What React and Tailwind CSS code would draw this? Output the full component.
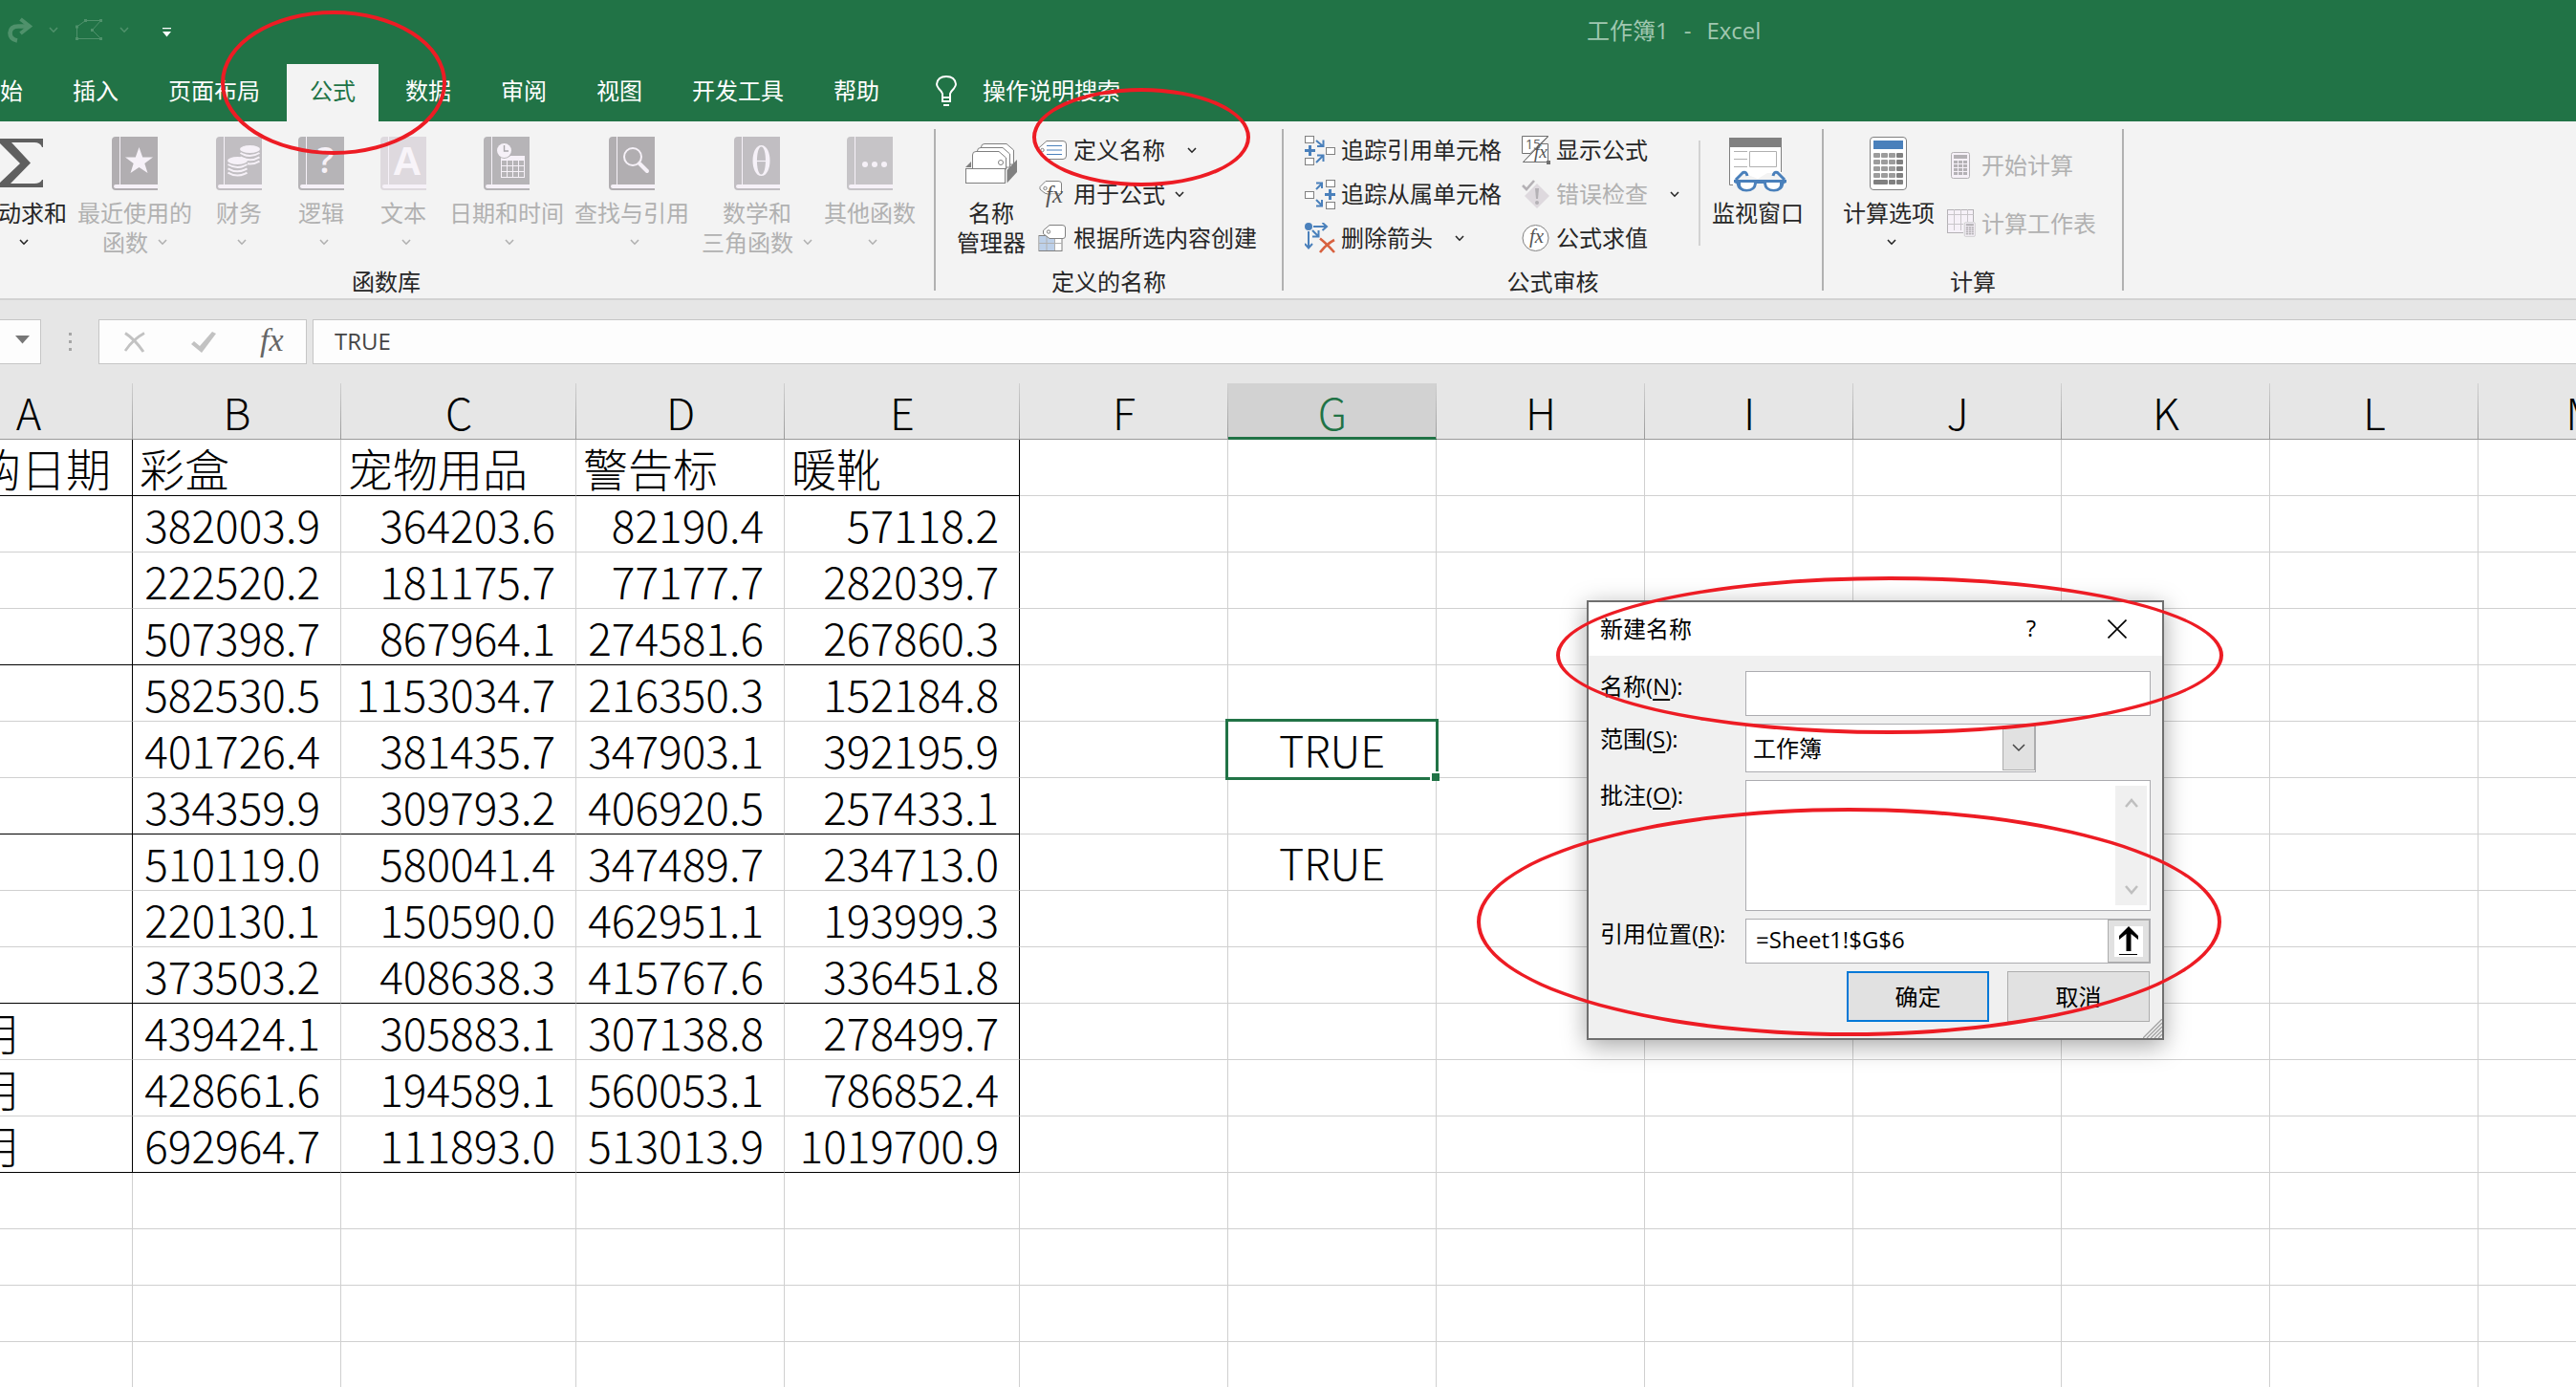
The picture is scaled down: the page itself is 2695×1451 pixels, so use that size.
import React from "react";

const UI = "font-['Open_Sans','Noto_Sans_CJK_SC',sans-serif]";
const SHEET = "font-['Noto_Sans_CJK_SC',sans-serif] font-light";

/* ---------- small drawings ---------- */

function Chevron({ className = "" }) {
  return (
    <svg className={`shrink-0 ${className}`} width="10" height="7" viewBox="0 0 10 7" fill="none" stroke="currentColor" strokeWidth="1.6">
      <path d="M1 1 L5 5.2 L9 1" />
    </svg>
  );
}

function Fx({ x, y, size, fill = "#555" }) {
  return (
    <text x={x} y={y} fontSize={size} fontStyle="italic" fontFamily="Liberation Serif, serif" fill={fill}>
      fx
    </text>
  );
}

function Book({ fill, children }) {
  return (
    <svg width="48" height="56" viewBox="0 0 48 56">
      <path d="M4 0 H48 V56 H4 Q0 56 0 52 V4 Q0 0 4 0 Z" fill={fill} />
      <path d="M8.5 0 V50" stroke="#f6f1f8" />
      <path d="M48 50 H4 Q2 50 2 52 Q2 54 4 54 H48 Z" fill="#f6f1f8" />
      {children}
    </svg>
  );
}

function StarBook() {
  return (
    <Book fill="#b1aeb1">
      <path d="M28.500 11 L32.200 21.500 H43 L34.300 28 L37.500 38 L28.500 32 L19.500 38 L22.700 28 L14 21.500 H24.800 Z" fill="#f6f1f8" />
    </Book>
  );
}

function Coins({ x, y }) {
  return (
    <g transform={`translate(${x} ${y})`}>
      <path d="M0 4 V17 Q10.500 23 21 17 V4 Z" fill="#c1bec2" />
      <ellipse cx="10.500" cy="4" rx="10.500" ry="4" fill="#f6f1f8" />
      <path d="M0.500 8 Q10.500 14 20.500 8 M0.500 12.300 Q10.500 18.300 20.500 12.300 M0.500 16.600 Q10.500 22.600 20.500 16.600" stroke="#f6f1f8" strokeWidth="2" fill="none" />
    </g>
  );
}

function CoinBook() {
  return (
    <Book fill="#c1bec2">
      <Coins x={25} y={9} />
      <Coins x={12} y={21} />
    </Book>
  );
}

function QuestionBook() {
  return (
    <Book fill="#b6b4b7">
      <text x="29" y="38" fontSize="38" fontWeight="600" textAnchor="middle" fontFamily="Open Sans, sans-serif" fill="#f6f1f8">?</text>
    </Book>
  );
}

function LetterBook() {
  return (
    <Book fill="#ded9de">
      <text x="28" y="40" fontSize="42" fontWeight="bold" textAnchor="middle" fontFamily="Liberation Sans, sans-serif" fill="#f8f4f9">A</text>
    </Book>
  );
}

function DateBook() {
  return (
    <Book fill="#b6b4b7">
      <rect x="18" y="20" width="25" height="23" fill="#f6f1f8" />
      {[25, 31, 37].map((y) => [19, 25, 31, 37].map((x) => <rect key={`${x}-${y}`} x={x} y={y} width="5" height="5" fill="#b6b4b7" />))}
      <circle cx="21.500" cy="14.500" r="8.500" fill="#b6b4b7" />
      <circle cx="21.500" cy="14.500" r="7.500" fill="#f6f1f8" />
      <path d="M21.500 9 V15 H26" stroke="#a9a7aa" fill="none" strokeWidth="1.400" />
    </Book>
  );
}

function SearchBook() {
  return (
    <Book fill="#b1aeb1">
      <circle cx="25" cy="21" r="9" stroke="#f6f1f8" strokeWidth="2" fill="none" />
      <path d="M32 28 L40 36" stroke="#f6f1f8" strokeWidth="4" strokeLinecap="round" />
    </Book>
  );
}

function ThetaBook() {
  return (
    <Book fill="#c1bec2">
      <path d="M28.500 9 C40.500 9 40.500 41 28.500 41 C16.500 41 16.500 9 28.500 9 Z M28.500 10.500 C22.500 10.500 22.500 39.500 28.500 39.500 C34.500 39.500 34.500 10.500 28.500 10.500 Z" fill="#f6f1f8" fillRule="evenodd" />
      <path d="M23 25.500 H34" stroke="#f6f1f8" strokeWidth="1.200" />
    </Book>
  );
}

function DotsBook() {
  return (
    <Book fill="#c6c4c7">
      <circle cx="19" cy="29" r="3" fill="#f6f1f8" />
      <circle cx="29" cy="29" r="3" fill="#f6f1f8" />
      <circle cx="39" cy="29" r="3" fill="#f6f1f8" />
    </Book>
  );
}

function Sigma() {
  return (
    <svg width="48" height="56" viewBox="0 0 48 56">
      <path d="M0 2 H47 V11 H46 Q44 6 38 6 H14 L34 27.500 L13 49 H38 Q44 49 46 45 H47 V53 H0 V50 L23 28 L0 5 Z" fill="#5f5f5f" />
    </svg>
  );
}

function NameManagerIcon() {
  return (
    <svg width="54" height="56" viewBox="0 -7 54 56" fill="#fff" stroke="#808080">
      <path d="M16.500 20 V4 Q16.500 .500 20 .500 H43 L50.500 7 V22 H30 Z" />
      <path d="M12.500 22 V8 Q12.500 4.500 16 4.500 H39 L46.500 11 V25 H25 Z" />
      <path d="M7.500 27 V12 Q7.500 8.500 11 8.500 H35 L42.500 15 V27 Z" />
      <circle cx="37" cy="20" r="2.500" />
      <path d="M0 25 L6 19 V25 Z M43.500 28 L54 17 V30 L43.500 41.500 Z" fill="#808080" stroke="none" />
      <rect x="0.500" y="26.500" width="41" height="15" />
    </svg>
  );
}

function DefineNameIcon() {
  return (
    <svg width="30" height="20" viewBox="0 0 30 20">
      <path d="M9 .500 H26 Q29.500 .500 29.500 4 V16 Q29.500 19.500 26 19.500 H9 L.500 12 V8 Z" fill="#fff" stroke="#808080" />
      <circle cx="4.500" cy="10" r="1.700" fill="none" stroke="#808080" />
      <path d="M9 5.500 H25 M9 10 H25 M9 14.500 H25" stroke="#4a80bb" />
    </svg>
  );
}

function UseInFormulaIcon() {
  return (
    <svg width="30" height="30" viewBox="0 0 30 30">
      <path d="M8 1.500 H21 Q24.500 1.500 24.500 4 V15 H10 L7 14 L2 10 V7.500 Z" fill="#fff" stroke="#808080" />
      <circle cx="7.500" cy="9" r="1.700" fill="none" stroke="#808080" />
      <path d="M14 15 H27 V30 H8 V20 Z" fill="#f3f3f3" />
      <Fx x={8} y={24} size={25} />
    </svg>
  );
}

function CreateFromSelectionIcon() {
  return (
    <svg width="30" height="28" viewBox="0 0 30 28">
      <rect x="1" y="11.500" width="24" height="16" fill="#fff" stroke="#808080" />
      <path d="M1.500 12 H17 V27 H1.500 Z" fill="#bdd0e9" />
      <path d="M1 19.500 H25 M9 12 V27 M17.500 12 V27" stroke="#b0b0b0" />
      <path d="M12 .500 H25 Q28.500 .500 28.500 3 V12 Q28.500 14.500 26 14.500 H12 L5.500 9.500 V6 Z" fill="#fff" stroke="#808080" />
      <circle cx="11" cy="7.500" r="1.700" fill="none" stroke="#808080" />
    </svg>
  );
}

function Arrow({ x1, y1, x2, y2, head }) {
  return <path d={`M${x1} ${y1} L${x2} ${y2} ${head}`} stroke="#4a80bb" strokeWidth="2" fill="none" />;
}

function PrecedentsIcon() {
  return (
    <svg width="32" height="31" viewBox="0 0 32 31">
      <g fill="#fff" stroke="#808080">
        <rect x="0.500" y="0.500" width="9" height="7" />
        <rect x="22.500" y="12.500" width="9" height="7" />
        <rect x="0.500" y="23.500" width="9" height="7" />
      </g>
      <path d="M5.500 10 V21 M0 15.500 H11" stroke="#4a80bb" strokeWidth="3" />
      <Arrow x1={12} y1={5} x2={19} y2={11} head="M19.500 4.500 V11 H13" />
      <Arrow x1={12} y1={28} x2={19} y2={21} head="M13 20.500 H19.500 V27" />
    </svg>
  );
}

function DependentsIcon() {
  return (
    <svg width="32" height="31" viewBox="0 0 32 31">
      <g fill="#fff" stroke="#808080">
        <rect x="0.500" y="12.500" width="9" height="7" />
        <rect x="22.500" y="0.500" width="9" height="7" />
        <rect x="22.500" y="23.500" width="9" height="7" />
      </g>
      <path d="M26.500 10 V21 M21 15.500 H32" stroke="#4a80bb" strokeWidth="3" />
      <Arrow x1={12} y1={10} x2={18} y2={4} head="M12 3.500 H18 V9" />
      <Arrow x1={12} y1={21} x2={18} y2={27} head="M18 21 V27.500 H12" />
    </svg>
  );
}

function RemoveArrowsIcon() {
  return (
    <svg width="32" height="32" viewBox="0 0 32 32">
      <circle cx="4" cy="4" r="4" fill="#4a80bb" />
      <g stroke="#4a80bb" strokeWidth="2" fill="none">
        <path d="M9 4 H23 M18.500 0 L23 4 L18.500 8" />
        <path d="M4 9 V26 M0 22 L4 26.500 L8 22" />
        <path d="M8 8 L14 14 M14.500 8 V14.500 H8" />
      </g>
      <path d="M16 16.500 Q23 22 31 31 M31 18 Q22 23 16 31" stroke="#d8613f" strokeWidth="2.600" fill="none" />
    </svg>
  );
}

function ShowFormulasIcon() {
  return (
    <svg width="30" height="30" viewBox="0 0 30 30">
      <path d="M.500 .500 H27.500 L9 18.500 H.500 Z" fill="#fff" stroke="#707070" />
      <path d="M27.500 8.500 V27.500 H1.500 L27.500 1 M20 8.500 H27.500" fill="none" stroke="#707070" />
      <path d="M20 9 H27 V27 H3 Z" fill="#fff" />
      <text x="4" y="14" fontSize="14" fontFamily="Open Sans, sans-serif" fill="#606060">15</text>
      <path d="M27.500 .500 L1.500 27.500" stroke="#707070" />
      <Fx x={13} y={23} size={19} />
      <rect x="26" y="26" width="4" height="4" fill="#707070" />
    </svg>
  );
}

function ErrorCheckIcon() {
  return (
    <svg width="30" height="30" viewBox="0 0 30 30">
      <path d="M16 4 L29 17 L16 30 L3 17 Z" fill="#ded9de" />
      <path d="M14 9 H18 L17 20 H15 Z" fill="#b4b1b5" />
      <circle cx="16" cy="24" r="2" fill="#b4b1b5" />
      <path d="M1 6 L5 10 L13 1" stroke="#b4b1b5" strokeWidth="2.600" fill="none" />
    </svg>
  );
}

function EvaluateIcon() {
  return (
    <svg width="30" height="30" viewBox="0 0 30 30">
      <circle cx="14.500" cy="15" r="13.500" fill="#fff" stroke="#808080" />
      <Fx x={8} y={20} size={21} />
    </svg>
  );
}

function WatchIcon() {
  return (
    <svg width="60" height="60" viewBox="0 0 60 60">
      <path d="M.500 3 H54.500 V40 H40 L30 46 L15 40 L6 46 V52.500 H.500 Z" fill="#fff" />
      <path d="M.500 3 V52.500 H4 M54.500 3 V39" stroke="#808080" fill="none" />
      <rect x="0" y="3" width="55" height="10" fill="#808080" />
      <path d="M5 17.500 H19 M5 25.500 H19 M5 33.500 H19 M21.500 17.500 H49.500 V33.500 H21.500 Z" stroke="#b0b0b0" fill="none" />
      <path d="M7 47 L14.500 39.500 Q18 38 19 43 M58 47 L50.500 39.500 Q47 38 46 43" stroke="#4a80bb" strokeWidth="3" fill="none" />
      <path d="M5 47 H60 V50 L57.500 51 Q56 59.500 47 59.500 Q37 59.500 36 51 H29 Q28 59.500 18 59.500 Q9 59.500 7.500 51 L5 50 Z" fill="#4a80bb" />
      <path d="M12 50 H26 Q26 57 18.500 57 Q11 57 12 50 Z M39 50 H53 Q54 57 46.500 57 Q39 57 39 50 Z" fill="#fff" />
    </svg>
  );
}

function CalculatorIcon() {
  return (
    <svg width="40" height="56" viewBox="0 0 40 56">
      <rect x="0.500" y="0.500" width="38" height="55" rx="3.500" fill="#fff" stroke="#808080" />
      <rect x="4" y="4" width="31" height="9" fill="#4a80bb" />
      {[17, 24, 31, 38].map((y) =>
        [4, 12, 20, 28].map((x) => <rect key={`${x}-${y}`} x={x} y={y} width="7" height="5" rx="1" fill={x === 28 ? "#808080" : "#9c9c9c"} />)
      )}
      <rect x="4" y="45" width="15" height="5" rx="1" fill="#808080" />
      <rect x="20" y="45" width="7" height="5" rx="1" fill="#808080" />
      <rect x="28" y="45" width="7" height="5" rx="1" fill="#808080" />
    </svg>
  );
}

function SmallCalc() {
  return (
    <g>
      <rect x="0.500" y="0.500" width="19" height="27" rx="2" fill="#f6f1f8" stroke="#b4b1b5" />
      <rect x="3" y="3" width="14" height="4" fill="#b4b1b5" />
      {[9, 13, 17, 21].map((y) => [3, 8, 13].map((x) => <rect key={`${x}-${y}`} x={x} y={y} width="4" height="3" fill="#b4b1b5" />))}
    </g>
  );
}

function CalculateNowIcon() {
  return (
    <svg width="20" height="28" viewBox="0 0 20 28">
      <SmallCalc />
    </svg>
  );
}

function CalculateSheetIcon() {
  return (
    <svg width="30" height="30" viewBox="0 0 30 30">
      <rect x="0.500" y="0.500" width="27" height="24" fill="#f6f1f8" stroke="#b4b1b5" />
      <path d="M.500 5.500 H27.500 M.500 15.500 H27.500 M7.500 0 V22 M14.500 0 V22 M21.500 0 V14" stroke="#c9c6ca" />
      <rect x="17" y="13" width="13" height="16" fill="#f3f3f3" />
      <g transform="translate(18 13.500) scale(.58 .54)">
        <SmallCalc />
      </g>
    </svg>
  );
}

function Bulb() {
  return (
    <svg width="24" height="34" viewBox="0 0 24 34" fill="none" stroke="#fff" strokeWidth="2">
      <path d="M8 23 V20 Q7 17.500 4 14.500 Q2 12 2 10 Q3 2 12 2 Q21 2 22 10 Q22 12 20 14.500 Q17 17.500 16 20 V28 H8 Z M8 24 H16 M9 32 H15" />
    </svg>
  );
}

/* ---------- ribbon pieces ---------- */

function BigButton({ icon, lines, width, disabled, arrow }) {
  const last = lines.length - 1;
  return (
    <button type="button" disabled={disabled} className={`flex flex-col items-center pt-4 ${width} ${disabled ? "text-[#b1b1b1]" : "text-[#262626]"}`}>
      <span className="flex h-14 items-center">{icon}</span>
      <span className="mt-2 flex flex-col items-center whitespace-nowrap leading-[31px]">
        {lines.map((line, i) => (
          <span key={line} className="flex items-center gap-2.5">
            {line}
            {arrow && i === last && i > 0 && <Chevron />}
          </span>
        ))}
        {arrow && last === 0 && (
          <span className="flex h-[31px] items-center pl-1.5">
            <Chevron />
          </span>
        )}
      </span>
    </button>
  );
}

function SmallButton({ icon, label, slot, disabled, arrow, height = "h-[46px]" }) {
  return (
    <button type="button" disabled={disabled} className={`flex items-center whitespace-nowrap ${height} ${disabled ? "text-[#b1b1b1]" : "text-[#262626]"}`}>
      <span className={`flex ${slot}`}>{icon}</span>
      {label}
      {arrow && <Chevron className={`text-[#262626] ${arrow}`} />}
    </button>
  );
}

function Group({ label, className = "", bodyClass = "", children }) {
  return (
    <section className={`flex shrink-0 flex-col ${className}`} aria-label={label}>
      <div className={`flex flex-1 items-start ${bodyClass}`}>{children}</div>
      <div className="h-8 text-center leading-[29px] text-[#262626]">{label}</div>
    </section>
  );
}

function Separator() {
  return <div className="my-2 w-0.5 shrink-0 bg-[#b1b1b1]" />;
}

function Ribbon() {
  return (
    <div className="flex h-[187px] shrink-0 border-b-2 border-[#d2d2d2] bg-[#f3f3f3]">
      <Group label="函数库" className="-ml-[169px]" bodyClass="pl-[138px] pr-3.5">
        <BigButton icon={<Sigma />} lines={["自动求和"]} width="w-[106px]" arrow />
        <BigButton icon={<StarBook />} lines={["最近使用的", "函数"]} width="w-[132px]" disabled arrow />
        <BigButton icon={<CoinBook />} lines={["财务"]} width="w-[86px]" disabled arrow />
        <BigButton icon={<QuestionBook />} lines={["逻辑"]} width="w-[86px]" disabled arrow />
        <BigButton icon={<LetterBook />} lines={["文本"]} width="w-[86px]" disabled arrow />
        <BigButton icon={<DateBook />} lines={["日期和时间"]} width="w-[130px]" disabled arrow />
        <BigButton icon={<SearchBook />} lines={["查找与引用"]} width="w-[132px]" disabled arrow />
        <BigButton icon={<ThetaBook />} lines={["数学和", "三角函数"]} width="w-[130px]" disabled arrow />
        <BigButton icon={<DotsBook />} lines={["其他函数"]} width="w-[106px]" disabled arrow />
      </Group>
      <Separator />
      <Group label="定义的名称" bodyClass="pl-3.5 pr-[26px]">
        <BigButton icon={<NameManagerIcon />} lines={["名称", "管理器"]} width="w-[88px]" />
        <div className="ml-[5px] flex flex-col items-start pt-[7px]">
          <SmallButton icon={<DefineNameIcon />} label="定义名称" slot="w-[37px]" arrow="ml-[23px]" />
          <SmallButton icon={<UseInFormulaIcon />} label="用于公式" slot="w-[37px]" arrow="ml-2.5" />
          <SmallButton icon={<CreateFromSelectionIcon />} label="根据所选内容创建" slot="w-[37px]" />
        </div>
      </Group>
      <Separator />
      <Group label="公式审核" bodyClass="pl-[22px] pr-[17px]">
        <div className="flex flex-col items-start pt-[7px]">
          <SmallButton icon={<PrecedentsIcon />} label="追踪引用单元格" slot="w-[38px]" />
          <SmallButton icon={<DependentsIcon />} label="追踪从属单元格" slot="w-[38px]" />
          <SmallButton icon={<RemoveArrowsIcon />} label="删除箭头" slot="w-[38px]" arrow="ml-[23px]" />
        </div>
        <div className="ml-[21px] flex flex-col items-start pr-5 pt-[7px]">
          <SmallButton icon={<ShowFormulasIcon />} label="显示公式" slot="w-9" />
          <SmallButton icon={<ErrorCheckIcon />} label="错误检查" slot="w-9" disabled arrow="ml-[23px]" />
          <SmallButton icon={<EvaluateIcon />} label="公式求值" slot="w-9" />
        </div>
        <div className="mt-5 h-[110px] w-0.5 bg-[#d2d2d2]" />
        <div className="ml-2.5">
          <BigButton icon={<WatchIcon />} lines={["监视窗口"]} width="w-[100px]" />
        </div>
      </Group>
      <Separator />
      <Group label="计算" bodyClass="pl-3 pr-[27px]">
        <BigButton icon={<CalculatorIcon />} lines={["计算选项"]} width="w-[112px]" arrow />
        <div className="flex flex-col items-start pl-[5px] pt-[15px]">
          <SmallButton icon={<CalculateNowIcon />} label="开始计算" slot="w-9 pl-1" disabled height="h-[61px]" />
          <SmallButton icon={<CalculateSheetIcon />} label="计算工作表" slot="w-9" disabled height="h-[61px]" />
        </div>
      </Group>
      <Separator />
    </div>
  );
}

/* ---------- window top ---------- */

function TitleBar() {
  return (
    <header className="flex h-[67px] shrink-0 items-center pl-2 pb-1 text-[#4f916b]">
      <button type="button" aria-label="恢复" className="w-[43px]">
        <svg width="27" height="28" viewBox="0 0 27 28" fill="none" stroke="currentColor">
          <path d="M10 24.500 Q2.500 23 2.500 16.500 Q3 9.500 11 9.500 H22" strokeWidth="4.600" />
          <path d="M13.500 2 L23 9.500 L13.500 17" strokeWidth="4" />
        </svg>
      </button>
      <Chevron />
      <button type="button" aria-label="任意多边形" className="ml-[18px] w-[46px]">
        <svg width="28" height="23" viewBox="0 0 28 23" fill="none" stroke="currentColor">
          <path d="M1.500 8 L10.500 1.500 H26.500 L17.500 11.500 L26.500 20.500 H1.500 Z" />
          <path d="M0 6.500 h3 v3 h-3z M9 0 h3 v3 h-3z M25 0 h3 v3 h-3z M16 10 h3 v3 h-3z M0 19 h3 v3 h-3z M25 19 h3 v3 h-3z" fill="currentColor" stroke="none" />
        </svg>
      </button>
      <Chevron />
      <button type="button" aria-label="自定义快速访问工具栏" className="ml-[35px] pt-1">
        <svg width="10" height="10" viewBox="0 0 10 10" fill="#fff">
          <path d="M0 0 H9 V1.200 H0 Z M0 4 H9 L4.500 9.500 Z" />
        </svg>
      </button>
      <h1 className="ml-[1480px] flex gap-4 whitespace-nowrap text-[#a0c7b0]">
        <span>工作簿1</span>
        <span>-</span>
        <span>Excel</span>
      </h1>
    </header>
  );
}

const TABS = ["开始", "插入", "页面布局", "公式", "数据", "审阅", "视图", "开发工具", "帮助"];

function Tabs() {
  return (
    <nav className="-ml-12 flex h-[60px] shrink-0 gap-1 text-white">
      {TABS.map((t) => (
        <button key={t} type="button" className={t === "公式" ? "bg-[#f3f3f3] px-6 pb-1 text-[#217346]" : "px-6 pb-1"}>
          {t}
        </button>
      ))}
      <button type="button" className="ml-[30px] flex items-center gap-[26px] pb-1">
        <Bulb />
        操作说明搜索
      </button>
    </nav>
  );
}

function FormulaBar() {
  return (
    <div className="flex h-[87px] shrink-0 items-center bg-[#e6e6e6]">
      <button type="button" aria-label="名称框" className="flex h-[47px] w-[43px] items-center justify-end border border-l-0 border-[#c6c6c6] bg-[#fdfdfd] pr-2.5 pb-1">
        <svg width="16" height="9" viewBox="0 0 16 9">
          <path d="M0 0 H15 L7.500 8.500 Z" fill="#777" />
        </svg>
      </button>
      <div className="flex w-[60px] flex-col items-center gap-[5px]">
        <span className="size-[3px] bg-[#a6a6a6]" />
        <span className="size-[3px] bg-[#a6a6a6]" />
        <span className="size-[3px] bg-[#a6a6a6]" />
      </div>
      <div className="flex h-[47px] w-[218px] items-center border border-[#c6c6c6] bg-[#fdfdfd] pl-[25px]">
        <button type="button" aria-label="取消" className="w-[71px]">
          <svg width="24" height="22" viewBox="0 0 24 22" fill="none" stroke="#c2c2c2">
            <path d="M2 1.500 Q12 8 21 21" strokeWidth="3" />
            <path d="M22 1.500 Q10 8 2 20" strokeWidth="2.600" />
          </svg>
        </button>
        <button type="button" aria-label="输入" className="w-[72px]">
          <svg width="26" height="22" viewBox="0 0 26 22">
            <path d="M0 13 L3 10 L9 15 L22 0 L26 2 L11 22 Z" fill="#c2c2c2" />
          </svg>
        </button>
        <button type="button" aria-label="插入函数" className="pb-1 font-['Liberation_Serif',serif] text-[34px] leading-8 italic text-[#666]">
          fx
        </button>
      </div>
      <input aria-label="编辑栏" defaultValue="TRUE" className="ml-1.5 h-[47px] min-w-0 flex-1 border border-r-0 border-[#c6c6c6] bg-[#fdfdfd] pb-0.5 pl-5.5 text-[#444] outline-none" />
    </div>
  );
}

/* ---------- sheet ---------- */

const COLS = ["A", "B", "C", "D", "E", "F", "G", "H", "I", "J", "K", "L", "M"];
const WIDE = ["C", "E"];
const ROWS = [
  ["采购日期", "彩盒", "宠物用品", "警告标", "暖靴"],
  ["1月", "382003.9", "364203.6", "82190.4", "57118.2"],
  ["2月", "222520.2", "181175.7", "77177.7", "282039.7"],
  ["3月", "507398.7", "867964.1", "274581.6", "267860.3"],
  ["4月", "582530.5", "1153034.7", "216350.3", "152184.8"],
  ["5月", "401726.4", "381435.7", "347903.1", "392195.9"],
  ["6月", "334359.9", "309793.2", "406920.5", "257433.1"],
  ["7月", "510119.0", "580041.4", "347489.7", "234713.0"],
  ["8月", "220130.1", "150590.0", "462951.1", "193999.3"],
  ["9月", "373503.2", "408638.3", "415767.6", "336451.8"],
  ["10月", "439424.1", "305883.1", "307138.8", "278499.7"],
  ["11月", "428661.6", "194589.1", "560053.1", "786852.4"],
  ["12月", "692964.7", "111893.0", "513013.9", "1019700.9"],
  [], [], [], [], [],
];
const RULED = [0, 3, 6, 9, 12];

function Cell({ row, col }) {
  const inData = col < 5 && row < 13;
  const bottom = inData && RULED.includes(row) ? "border-b-black" : "border-b-[#d0d0d0]";
  const right = row < 13 && (col === 0 || col === 4) ? "border-r-black" : "border-r-[#d0d0d0]";
  const text = row === 0 ? "pl-[7px] text-left text-[47px]" : col === 0 ? "pl-[7px] text-left text-[46px]" : "pr-[21px] text-right text-[46px]";
  const isTrue = col === 6 && (row === 5 || row === 7);
  const selected = isTrue && row === 5;
  return (
    <td className={`h-[59px] border-b border-r p-0 leading-[58px] whitespace-nowrap ${bottom} ${right} ${isTrue ? "relative text-center text-[45px]" : text}`}>
      {isTrue ? "TRUE" : ROWS[row][col]}
      {selected && (
        <span className="absolute -inset-[3px] border-3 border-[#217346]">
          <span className="absolute -right-1 -bottom-1 size-2.5 border-t-2 border-l-2 border-white bg-[#217346]" />
        </span>
      )}
    </td>
  );
}

function Sheet() {
  return (
    <main className={`min-h-0 flex-1 overflow-hidden bg-white text-black ${SHEET}`}>
      <table className="-ml-[79px] w-[2890px] table-fixed border-separate border-spacing-0">
        <colgroup>
          {COLS.map((c) => (
            <col key={c} className={WIDE.includes(c) ? "w-[246px]" : "w-[218px]"} />
          ))}
        </colgroup>
        <thead>
          <tr>
            {COLS.map((c) => (
              <th
                key={c}
                scope="col"
                className={`relative h-[59px] border-b p-0 pt-0.5 text-[45px] leading-[56px] font-light after:absolute after:inset-y-0 after:right-0 after:w-px after:bg-linear-to-b after:from-[#d0d0d0] after:to-[#999] ${
                  c === "G" ? "border-[#217346] bg-[#d2d2d2] text-[#217346] shadow-[inset_0_-2px_0_#217346]" : "border-[#999] bg-[#e6e6e6]"
                }`}
              >
                {c}
              </th>
            ))}
          </tr>
        </thead>
        <tbody>
          {ROWS.map((_, r) => (
            <tr key={r}>
              {COLS.map((c, i) => (
                <Cell key={c} row={r} col={i} />
              ))}
            </tr>
          ))}
        </tbody>
      </table>
    </main>
  );
}

/* ---------- dialog ---------- */

function Label({ id, text, hotkey }) {
  return (
    <label htmlFor={id} className="whitespace-nowrap leading-8">
      {text}(<span className="underline underline-offset-4">{hotkey}</span>):
    </label>
  );
}

function NewNameDialog() {
  return (
    <div role="dialog" aria-label="新建名称" className="absolute top-[628px] left-[1660px] w-[604px] border-2 border-[#6f6f6f] bg-[#f0f0f0] text-black shadow-[0_6px_24px_rgba(0,0,0,0.35)]">
      <div className="flex h-14 items-center bg-white pl-3 pr-[37px]">
        <h2 className="flex-1">新建名称</h2>
        <button type="button" aria-label="帮助" className="mr-[75px] pb-0.5">?</button>
        <button type="button" aria-label="关闭">
          <svg width="20" height="20" viewBox="0 0 20 20" stroke="#000" strokeWidth="1.600">
            <path d="M.500 .500 L19.500 19.500 M19.500 .500 L.500 19.500" />
          </svg>
        </button>
      </div>
      <form className="grid grid-cols-[152px_1fr] gap-y-2 pt-4 pr-3 pb-[17px] pl-3">
        <Label id="name" text="名称" hotkey="N" />
        <input id="name" className="h-[47px] border border-[#acacb0] bg-white px-2 outline-none" />
        <Label id="scope" text="范围" hotkey="S" />
        <div className="relative w-[304px]">
          <select id="scope" defaultValue="工作簿" className="h-[51px] w-full appearance-none border border-[#acacb0] bg-white pl-[7px] outline-none">
            <option>工作簿</option>
            <option>Sheet1</option>
          </select>
          <span className="pointer-events-none absolute inset-y-0.5 right-px flex w-[34px] items-center justify-center border border-[#adadad] bg-[#e1e1e1] text-[#444]">
            <svg width="14" height="9" viewBox="0 0 14 9" fill="none" stroke="currentColor" strokeWidth="1.500">
              <path d="M1 1 L7 7 L13 1" />
            </svg>
          </span>
        </div>
        <Label id="note" text="批注" hotkey="O" />
        <div className="flex h-[137px] border border-[#acacb0] bg-white py-[5px] pr-[3px]">
          <textarea id="note" className="min-w-0 flex-1 resize-none px-2 outline-none" />
          <div className="flex w-[33px] flex-col items-center justify-between bg-[#f0f0f0] pt-3 pb-2.5 text-[#bfbfbf]">
            <svg width="14" height="12" viewBox="0 0 14 12" fill="none" stroke="currentColor" strokeWidth="2.500">
              <path d="M1 10 L7 3 L13 10" />
            </svg>
            <svg width="14" height="12" viewBox="0 0 14 12" fill="none" stroke="currentColor" strokeWidth="2.500">
              <path d="M1 2 L7 9 L13 2" />
            </svg>
          </div>
        </div>
        <Label id="refers" text="引用位置" hotkey="R" />
        <div className="flex h-[47px] border border-[#acacb0] bg-white">
          <input id="refers" defaultValue="=Sheet1!$G$6" className="min-w-0 flex-1 bg-transparent pb-1 pl-2.5 outline-none" />
          <button type="button" aria-label="折叠对话框" className="flex w-11 items-center justify-center border border-[#adadad] bg-[#e1e1e1]">
            <svg width="30" height="32" viewBox="0 0 30 32">
              <rect width="30" height="32" fill="#fff" />
              <path d="M15 0 L25 10 V14 L17.500 8 V26 H12.500 V8 L5 14 V10 Z M5 29 H24 V30 H5 Z" />
            </svg>
          </button>
        </div>
        <div className="col-span-2 flex justify-end gap-[19px] pr-px">
          <button type="button" className="h-[53px] w-[149px] border-2 border-[#0078d7] bg-[#e1e1e1]">确定</button>
          <button type="button" className="h-[53px] w-[149px] border border-[#adadad] bg-[#e1e1e1]">取消</button>
        </div>
      </form>
      <svg className="absolute right-0 bottom-0" width="20" height="20" viewBox="0 0 20 20" stroke="#a0a0a0" strokeWidth="1.300">
        <path d="M0 20 L20 0 M4 20 L20 4 M8 20 L20 8 M12 20 L20 12 M16 20 L20 16" />
      </svg>
    </div>
  );
}

const RING = "pointer-events-none absolute rounded-[50%] border-4 border-[#ed1c24]";

export default function App() {
  return (
    <div className={`relative flex h-screen flex-col overflow-hidden bg-[#217346] text-2xl ${UI}`}>
      <TitleBar />
      <Tabs />
      <Ribbon />
      <FormulaBar />
      <Sheet />
      <NewNameDialog />
      <div className={`${RING} top-[11px] left-[231px] h-[151px] w-[236px]`} />
      <div className={`${RING} top-[92px] left-[1080px] h-[103px] w-[228px]`} />
      <div className={`${RING} top-[603px] left-[1628px] h-[165px] w-[698px]`} />
      <div className={`${RING} top-[845px] left-[1545px] h-[239px] w-[779px]`} />
    </div>
  );
}
